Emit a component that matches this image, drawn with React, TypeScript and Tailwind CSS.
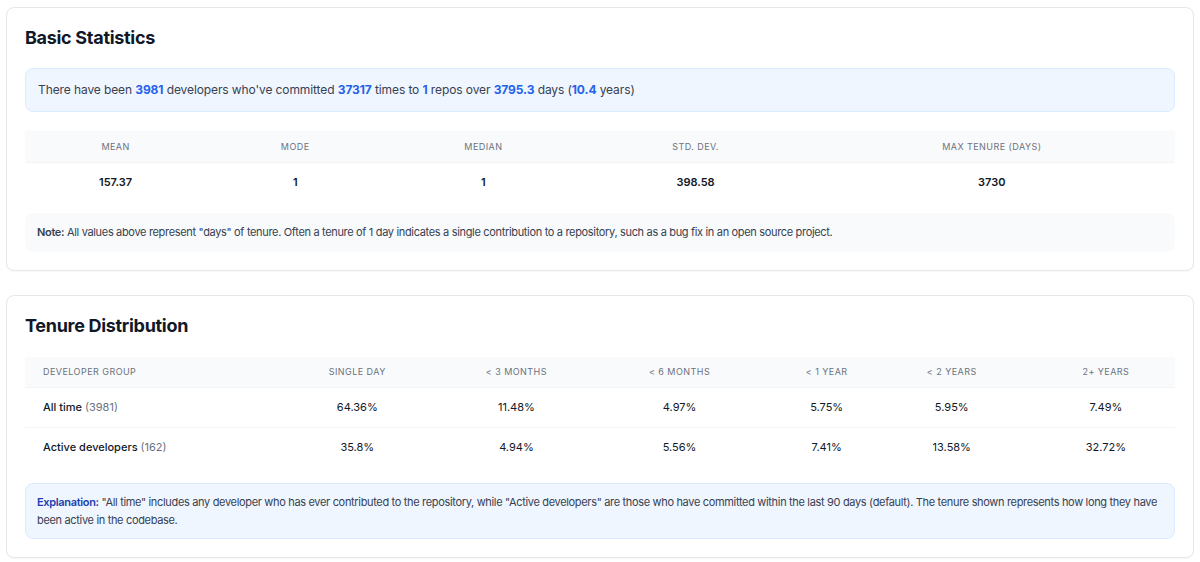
import React from 'react';

const basicHeaders = [
  { label: 'Mean', w: 'w-[181px]' },
  { label: 'Mode', w: 'w-[178px]' },
  { label: 'Median', w: 'w-[198px]' },
  { label: 'Std. Dev.', w: 'w-[226px]' },
  { label: 'Max Tenure (Days)', w: 'w-[366px]' },
];
const basicValues = ['157.37', '1', '1', '398.58', '3730'];

const tenureHeaders = [
  { label: 'Single Day', w: 'w-[206px]' },
  { label: '< 3 Months', w: 'w-[112px]' },
  { label: '< 6 Months', w: 'w-[214px]' },
  { label: '< 1 Year', w: 'w-[80px]' },
  { label: '< 2 Years', w: 'w-[170px]' },
  { label: '2+ Years', w: 'w-[138px]' },
];

const tenureRows = [
  { name: 'All time', count: 3981, values: ['64.36%', '11.48%', '4.97%', '5.75%', '5.95%', '7.49%'] },
  { name: 'Active developers', count: 162, values: ['35.8%', '4.94%', '5.56%', '7.41%', '13.58%', '32.72%'] },
];

function Num({ children }: { children: React.ReactNode }) {
  return <span className="font-bold text-[#2563eb]">{children}</span>;
}

function Card({ title, children }: { title: string; children: React.ReactNode }) {
  return (
    <section className="rounded-lg border border-gray-200 bg-white px-[18px] pb-[18px] pt-[16px] shadow-[0_1px_2px_rgba(0,0,0,0.04)]">
      <h2 className="text-[18px] font-bold leading-[28px] tracking-[-0.3px] text-[#111827]">{title}</h2>
      {children}
    </section>
  );
}

export default function App() {
  return (
    <div className="flex min-h-[562px] flex-col gap-[24px] bg-white px-[6px] pt-[7px] font-['Inter',sans-serif] text-[#111827]">
      {/* Basic statistics */}
      <Card title="Basic Statistics">
        <div className="mt-[16px] rounded-lg border border-[#dbeafe] bg-[#eff6ff] px-3 py-[11px] text-[12px] leading-[20px] tracking-[-0.1px] text-[#374151]">
          There have been <Num>3981</Num> developers who've committed <Num>37317</Num> times to <Num>1</Num> repos over{' '}
          <Num>3795.3</Num> days (<Num>10.4</Num> years)
        </div>

        <table className="mt-[19px] w-full table-fixed border-collapse">
          <thead>
            <tr className="border-b border-gray-100 bg-[#f9fafb]">
              {basicHeaders.map((h) => (
                <th
                  key={h.label}
                  className={`${h.w} h-[31px] px-4 text-center text-[9px] font-normal uppercase tracking-wider text-[#6b7280]`}
                >
                  {h.label}
                </th>
              ))}
            </tr>
          </thead>
          <tbody>
            <tr>
              {basicValues.map((v, i) => (
                <td key={i} className="h-[40px] px-4 text-center text-[11px] font-semibold text-[#111827]">
                  {v}
                </td>
              ))}
            </tr>
          </tbody>
        </table>

        <div className="mt-[11px] rounded-lg bg-[#f9fafb] px-3 py-3 text-[11px] leading-[15px] tracking-[-0.33px] text-[#374151]">
          <span className="font-semibold">Note:</span> All values above represent "days" of tenure. Often a tenure of 1 day
          indicates a single contribution to a repository, such as a bug fix in an open source project.
        </div>
      </Card>

      {/* Tenure distribution */}
      <Card title="Tenure Distribution">
        <table className="mt-[17px] w-full table-fixed border-collapse">
          <thead>
            <tr className="border-b border-gray-100 bg-[#f9fafb]">
              <th className="h-[30px] w-[229px] px-[18px] text-left text-[9px] font-normal uppercase tracking-wider text-[#6b7280]">
                Developer Group
              </th>
              {tenureHeaders.map((h) => (
                <th
                  key={h.label}
                  className={`${h.w} h-[30px] px-2 text-center text-[9px] font-normal uppercase tracking-wider text-[#6b7280]`}
                >
                  {h.label}
                </th>
              ))}
            </tr>
          </thead>
          <tbody>
            {tenureRows.map((r, ri) => (
              <tr key={r.name} className={ri === 0 ? 'border-b border-gray-100' : ''}>
                <td className="h-[40px] px-[18px] text-left text-[11px] font-medium text-[#111827]">
                  {r.name} <span className="font-normal text-[#6b7280]">({r.count})</span>
                </td>
                {r.values.map((v, i) => (
                  <td key={i} className="h-[40px] px-2 text-center text-[11px] text-[#111827]">
                    {v}
                  </td>
                ))}
              </tr>
            ))}
          </tbody>
        </table>

        <div className="mt-[16px] rounded-lg border border-[#dbeafe] bg-[#eff6ff] px-[11px] py-[9px] text-[11px] leading-[18px] tracking-[-0.33px] text-[#374151]">
          <span className="font-semibold text-[#1e40af]">Explanation:</span> "All time" includes any developer who has
          ever contributed to the repository, while "Active developers" are those who have committed within the last 90
          days (default). The tenure shown represents how long they have been active in the codebase.
        </div>
      </Card>
    </div>
  );
}
